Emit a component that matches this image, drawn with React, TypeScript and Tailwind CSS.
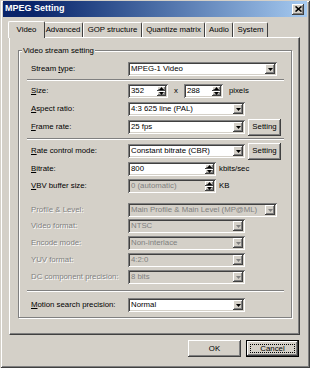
import React from 'react';

// 3D borders, classic look
const raised = 'shadow-[inset_-1px_-1px_#404040,inset_1px_1px_#ffffff,inset_-2px_-2px_#808080]';
const sunken = 'shadow-[inset_1px_1px_#808080,inset_-1px_-1px_#ffffff,inset_2px_2px_#404040,inset_-2px_-2px_#d4d0c8]';
const greyText = 'text-[#808080] [text-shadow:1px_1px_0_#ffffff]';

const Arrow = ({ up, disabled }: { up?: boolean; disabled?: boolean }) => (
  <svg width="5" height="3" viewBox="0 0 5 3" className="block">
    <path d={up ? 'M2.5 0L5 3H0z' : 'M0 0h5L2.5 3z'} fill={disabled ? '#808080' : '#000000'} />
  </svg>
);

const Combo = ({ value, className, disabled }: { value: string; className: string; disabled?: boolean }) => (
  <div
    className={`h-[14px] flex items-center p-[2px] ${sunken} ${className} ${
      disabled ? 'bg-[#d4d0c8] text-[#808080]' : 'bg-white text-black'
    }`}
  >
    <span className="flex-1 pl-[1px] whitespace-nowrap overflow-hidden leading-none">{value}</span>
    <div className={`w-[10px] h-full bg-[#d4d0c8] flex items-center justify-center ${raised}`}>
      <Arrow disabled={disabled} />
    </div>
  </div>
);

const Spin = ({ value, className, disabled }: { value: string; className: string; disabled?: boolean }) => (
  <div
    className={`h-[14px] flex items-center p-[2px] ${sunken} ${className} ${
      disabled ? 'bg-[#d4d0c8] text-[#808080]' : 'bg-white text-black'
    }`}
  >
    <span className="flex-1 pl-[1px] whitespace-nowrap overflow-hidden leading-none">{value}</span>
    <div className="w-[9px] h-full flex flex-col">
      <div className={`flex-1 bg-[#d4d0c8] flex items-center justify-center ${raised}`}>
        <Arrow up />
      </div>
      <div className={`flex-1 bg-[#d4d0c8] flex items-center justify-center ${raised}`}>
        <Arrow />
      </div>
    </div>
  </div>
);

const Button = ({ children, className }: { children: React.ReactNode; className: string }) => (
  <div className={`relative bg-[#d4d0c8] flex items-center justify-center text-black ${raised} ${className}`}>{children}</div>
);

const Label = ({ children, disabled }: { children: React.ReactNode; disabled?: boolean }) => (
  <div className={`w-[97px] shrink-0 whitespace-nowrap ${disabled ? greyText : 'text-black'}`}>{children}</div>
);

const Separator = ({ className }: { className: string }) => (
  <div className={`h-[2px] -ml-[4px] w-[257px] border-t border-[#808080] border-b border-b-white ${className}`} />
);

const tabs = [
  { label: 'Video', w: 'w-[37px] -ml-[2px] -mr-[2px] h-[17px] z-10 -mb-px pb-px', active: true },
  { label: 'Advanced', w: 'w-[40px] h-[15px]' },
  { label: 'GOP structure', w: 'w-[59px] h-[15px]' },
  { label: 'Quantize matrix', w: 'w-[63px] h-[15px]' },
  { label: 'Audio', w: 'w-[28px] h-[15px]' },
  { label: 'System', w: 'w-[35px] h-[15px]' },
];

export default function App() {
  return (
    <div className="w-[310px] h-[368px] bg-[#d4d0c8] overflow-hidden flex flex-col text-[7.8px] font-['Liberation_Sans',Arial,sans-serif] shadow-[inset_1px_1px_#d4d0c8,inset_-1px_-1px_#404040,inset_2px_2px_#ffffff,inset_-2px_-2px_#808080]">
      {/* title bar */}
      <div className="pt-[1px] px-[3px]">
        <div className="h-[16px] flex items-center justify-between bg-linear-to-r from-[#0a246a] from-10% to-[#a6caf0] pl-[2px] pr-[3px]">
          <span className="text-white font-bold text-[9px]">MPEG Setting</span>
          <div className={`w-[12px] h-[11px] bg-[#d4d0c8] flex items-center justify-center ${raised}`}>
            <svg width="7" height="6" viewBox="0 0 7 6">
              <path d="M0.5 0.5L6.5 5.5M6.5 0.5L0.5 5.5" stroke="#000" strokeWidth="1.6" />
            </svg>
          </div>
        </div>
      </div>

      {/* tabs */}
      <div className="ml-[9px] mt-[3px] w-[291px]">
        <div className="h-[17px] flex items-end pl-[1px]">
          {tabs.map((t) => (
            <div
              key={t.label}
              className={`relative shrink-0 flex items-center justify-center bg-[#d4d0c8] border-l border-t border-white border-r border-r-[#404040] rounded-t-[2px] whitespace-nowrap text-black ${t.w}`}
            >
              {t.label}
            </div>
          ))}
        </div>

        {/* panel */}
        <div className="h-[298px] border-l border-t border-white border-r border-b border-r-[#404040] border-b-[#404040] shadow-[inset_-1px_-1px_#808080] pt-[12px] pl-[8px]">
          <div className="relative w-[274px] h-[268px] border border-[#808080] shadow-[inset_1px_1px_#ffffff,1px_1px_#ffffff] pt-[11px] pl-[12px]">
            <span className="absolute left-[3px] -top-[6px] bg-[#d4d0c8] px-[1px] text-black">Video stream setting</span>

            <div className="flex items-center h-[14px]">
              <Label>Stream <u>t</u>ype:</Label>
              <Combo value="MPEG-1 Video" className="w-[149px]" />
            </div>

            <Separator className="mt-[3px]" />

            <div className="flex items-center h-[14px] mt-[3px]">
              <Label><u>S</u>ize:</Label>
              <Spin value="352" className="w-[40px]" />
              <span className="ml-[6px] mr-[6px]">x</span>
              <Spin value="288" className="w-[39px]" />
              <span className="ml-[6px]">pixels</span>
            </div>

            <div className="flex items-center h-[14px] mt-[4px]">
              <Label><u>A</u>spect ratio:</Label>
              <Combo value="4:3 625 line (PAL)" className="w-[117px]" />
            </div>

            <div className="flex items-center h-[14px] mt-[4px]">
              <Label><u>F</u>rame rate:</Label>
              <Combo value="25 fps" className="w-[117px]" />
              <Button className="w-[33px] h-[17px] ml-[3px] shrink-0">Setting</Button>
            </div>

            <Separator className="mt-[4px]" />

            <div className="flex items-center h-[14px] mt-[4px]">
              <Label><u>R</u>ate control mode:</Label>
              <Combo value="Constant bitrate (CBR)" className="w-[117px]" />
              <Button className="w-[33px] h-[17px] ml-[3px] shrink-0">Setting</Button>
            </div>

            <div className="flex items-center h-[14px] mt-[4px]">
              <Label><u>B</u>itrate:</Label>
              <Spin value="800" className="w-[88px]" />
              <span className="ml-[3px]">kbits/sec</span>
            </div>

            <div className="flex items-center h-[14px] mt-[3px]">
              <Label><u>V</u>BV buffer size:</Label>
              <Spin value="0 (automatic)" className="w-[88px]" disabled />
              <span className="ml-[3px]">KB</span>
            </div>

            <div className="flex items-center h-[14px] mt-[10px]">
              <Label disabled>Profile &amp; Level:</Label>
              <Combo value="Main Profile & Main Level (MP@ML)" className="w-[149px]" disabled />
            </div>

            <div className="flex items-center h-[14px] mt-[2px]">
              <Label disabled>Video format:</Label>
              <Combo value="NTSC" className="w-[117px]" disabled />
            </div>

            <div className="flex items-center h-[14px] mt-[3px]">
              <Label disabled>Encode mode:</Label>
              <Combo value="Non-interlace" className="w-[117px]" disabled />
            </div>

            <div className="flex items-center h-[14px] mt-[3px]">
              <Label disabled>YUV format:</Label>
              <Combo value="4:2:0" className="w-[117px]" disabled />
            </div>

            <div className="flex items-center h-[14px] mt-[3px]">
              <Label disabled>DC component precision:</Label>
              <Combo value="8 bits" className="w-[117px]" disabled />
            </div>

            <Separator className="mt-[6px]" />

            <div className="flex items-center h-[14px] mt-[6px]">
              <Label><u>M</u>otion search precision:</Label>
              <Combo value="Normal" className="w-[117px]" />
            </div>
          </div>
        </div>
      </div>

      {/* buttons */}
      <div className="flex justify-end gap-[5px] pr-[11px] mt-[5px]">
        <Button className="w-[53px] h-[17px]">OK</Button>
        <div className="w-[53px] h-[17px] border border-black">
          <Button className="w-full h-full">
            <div className="absolute inset-[3px] border border-dotted border-black" />
            Cancel
          </Button>
        </div>
      </div>
    </div>
  );
}
